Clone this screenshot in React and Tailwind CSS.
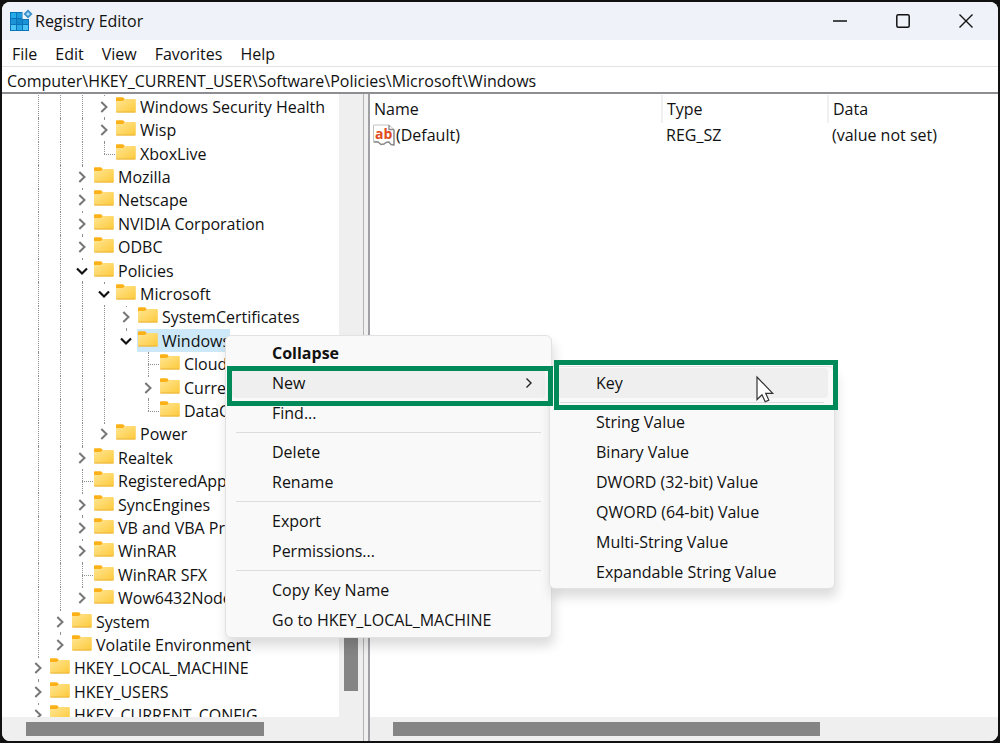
import { useState } from "react";
import clsx from "clsx";

const MENU = ["File", "Edit", "View", "Favorites", "Help"];

const NODES = [
  { name: "Windows Security Health", depth: 3, state: "closed" },
  { name: "Wisp", depth: 3, state: "closed" },
  { name: "XboxLive", depth: 3 },
  { name: "Mozilla", depth: 2, state: "closed" },
  { name: "Netscape", depth: 2, state: "closed" },
  { name: "NVIDIA Corporation", depth: 2, state: "closed" },
  { name: "ODBC", depth: 2, state: "closed" },
  { name: "Policies", depth: 2, state: "open" },
  { name: "Microsoft", depth: 3, state: "open" },
  { name: "SystemCertificates", depth: 4, state: "closed" },
  { name: "Windows", depth: 4, state: "open" },
  { name: "CloudContent", depth: 5 },
  { name: "CurrentVersion", depth: 5, state: "closed" },
  { name: "DataCollection", depth: 5 },
  { name: "Power", depth: 3, state: "closed" },
  { name: "Realtek", depth: 2, state: "closed" },
  { name: "RegisteredApplications", depth: 2 },
  { name: "SyncEngines", depth: 2, state: "closed" },
  { name: "VB and VBA Program Settings", depth: 2, state: "closed" },
  { name: "WinRAR", depth: 2, state: "closed" },
  { name: "WinRAR SFX", depth: 2 },
  { name: "Wow6432Node", depth: 2, state: "closed" },
  { name: "System", depth: 1, state: "closed" },
  { name: "Volatile Environment", depth: 1, state: "closed" },
  { name: "HKEY_LOCAL_MACHINE", depth: 0, state: "closed" },
  { name: "HKEY_USERS", depth: 0, state: "closed" },
  { name: "HKEY_CURRENT_CONFIG", depth: 0, state: "closed" },
];

// true when another node of the same level follows before the branch ends
const continues = (index, level) => {
  for (let i = index + 1; i < NODES.length; i++) {
    if (NODES[i].depth === level) return true;
    if (NODES[i].depth < level) return false;
  }
  return false;
};

const RegistryIcon = () => (
  <svg width="23" height="24" viewBox="0 0 23 24">
    <path d="M0 3h12.500v7H19v12H0z" fill="#0b74b8" />
    <path d="M1 4h5v5H1z" fill="#27aae8" />
    <path d="M7 4h5v5H7z" fill="#1d9bdc" />
    <path d="M1 10h5v5H1z" fill="#1c93d6" />
    <path d="M7 10h5v5H7z" fill="#1488cc" />
    <path d="M13 11h5v4h-5z" fill="#1c93d6" />
    <path d="M1 16h5v5H1zM13 16h5v5h-5z" fill="#4cc4f5" />
    <path d="M7 16h5v5H7z" fill="#2ba9e6" />
    <path d="M18 .500 22.500 5 18 9.500 13.500 5z" fill="#3c8fcb" />
    <path d="M18 3 20 5 18 7 16 5z" fill="#9fdcf8" />
  </svg>
);

const FolderIcon = () => (
  <svg width="20" height="16" viewBox="0 0 20 16" className="shrink-0">
    <defs>
      <linearGradient id="folder" x1="0" y1="0" x2="1" y2="1">
        <stop offset="0" stopColor="#ffe694" />
        <stop offset="1" stopColor="#fdc93a" />
      </linearGradient>
    </defs>
    <path d="M0 1.200Q0 .3 1 .3h5.600q.6 0 1 .5L9 2.200 7 4.500H0z" fill="#fbb117" />
    <path d="M0 4h6.500q.6 0 1-.5L9 2.100h9.800q1 0 1 1V14.500q0 1-1 1H1q-1 0-1-1z" fill="url(#folder)" />
    <path d="M.4 15h19" stroke="#eab43c" strokeWidth="1" />
  </svg>
);

const StringIcon = () => (
  <svg width="22" height="22" viewBox="0 0 22 22" className="shrink-0">
    <path
      d="M.5 1h15.500l5 4.500V21l-3-.5-2-2.500-3 .5-2 1.500-3 .5-3-2.500-2-.5L.5 17z"
      fill="#fff"
      stroke="#c4c4c4"
    />
    <path
      d="M16 1v4.500h5M21 5.500V21l-3-.5-2-2.500-3 .5-2 1.500-3 .5-3-2.500H.5"
      fill="none"
      stroke="#8b8b8b"
      strokeWidth="1.400"
    />
    <text x="2" y="15" fill="#de4b1c" fontSize="14" fontWeight="700" fontFamily="Open Sans, sans-serif">
      ab
    </text>
  </svg>
);

const Chevron = ({ open }) => (
  <svg width="12" height="12" viewBox="0 0 12 12" fill="none">
    {open ? (
      <path d="M1 3.500 6 8.500 11 3.500" stroke="#111" strokeWidth="2.200" />
    ) : (
      <path d="M3.300 1 8.500 6 3.300 11" stroke="#777" strokeWidth="2" />
    )}
  </svg>
);

const TreeRow = ({ node, index, selected, onSelect }) => {
  const more = continues(index, node.depth);
  return (
    <li className="flex min-h-0 pl-[25px]">
      {Array.from({ length: node.depth }, (_, level) => (
        <span key={level} className="flex w-[22px] shrink-0 pl-[11px]">
          {continues(index, level) && (
            <span className="border-l border-dotted border-[#8f8f8f]" />
          )}
        </span>
      ))}
      <span className="relative flex w-[22px] shrink-0 items-center justify-center">
        <span
          className={clsx(
            "absolute left-[11px] top-0 border-l border-dotted border-[#8f8f8f]",
            more ? "bottom-0" : "bottom-1/2"
          )}
        />
        {node.state ? (
          <button
            aria-label={`Toggle ${node.name}`}
            className="relative flex h-5 w-4 items-center justify-center bg-white"
          >
            <Chevron open={node.state === "open"} />
          </button>
        ) : (
          <span className="absolute left-[11px] right-0 top-1/2 border-t border-dotted border-[#8f8f8f]" />
        )}
      </span>
      <button
        onClick={() => onSelect(node.name)}
        className={clsx(
          "flex items-center gap-1 whitespace-nowrap pl-px leading-5",
          selected && "bg-[#cce8f9]"
        )}
      >
        <span className="pb-1">
          <FolderIcon />
        </span>
        {node.name}
      </button>
    </li>
  );
};

const MenuItem = ({ children, bold, active, arrow, outline }) => (
  <li className="relative">
    <button
      className={clsx(
        "flex h-[30px] w-full items-center justify-between rounded pl-10 pr-3 text-left",
        bold && "font-bold",
        active && "bg-[#efefef]"
      )}
    >
      {children}
      {arrow && (
        <svg width="8" height="12" viewBox="0 0 8 12" fill="none">
          <path d="M1.500 1.500 6 6 1.500 10.500" stroke="#222" strokeWidth="1.400" />
        </svg>
      )}
    </button>
    {outline}
  </li>
);

const Separator = () => (
  <li role="separator" className="flex h-[9px] items-center px-1">
    <span className="h-px w-full bg-[#dcdcdc]" />
  </li>
);

const ContextMenu = () => (
  <ul className="absolute left-[225px] top-[335px] w-[327px] rounded-md border border-[#e2e2e2] bg-[#f9f9f9] px-1.5 py-0.5 shadow-[2px_8px_12px_rgba(0,0,0,0.14)]">
    <MenuItem bold>Collapse</MenuItem>
    <MenuItem
      active
      arrow
      outline={
        <span className="pointer-events-none absolute -bottom-2 -left-[5px] -right-2 -top-0.5 z-10 border-[5px] border-[#008a5a]" />
      }
    >
      New
    </MenuItem>
    <MenuItem>Find...</MenuItem>
    <Separator />
    <MenuItem>Delete</MenuItem>
    <MenuItem>Rename</MenuItem>
    <Separator />
    <MenuItem>Export</MenuItem>
    <MenuItem>Permissions...</MenuItem>
    <Separator />
    <MenuItem>Copy Key Name</MenuItem>
    <MenuItem>Go to HKEY_LOCAL_MACHINE</MenuItem>
  </ul>
);

const NewSubmenu = () => (
  <ul className="absolute left-[549px] top-[366px] w-[286px] rounded-md border border-[#e2e2e2] bg-[#f9f9f9] px-1.5 py-px shadow-[2px_8px_12px_rgba(0,0,0,0.14)]">
    <MenuItem
      active
      outline={
        <span className="pointer-events-none absolute -bottom-3 -left-0.5 -right-2.5 -top-2 z-10 border-[5px] border-[#008a5a]" />
      }
    >
      Key
    </MenuItem>
    <Separator />
    <MenuItem>String Value</MenuItem>
    <MenuItem>Binary Value</MenuItem>
    <MenuItem>DWORD (32-bit) Value</MenuItem>
    <MenuItem>QWORD (64-bit) Value</MenuItem>
    <MenuItem>Multi-String Value</MenuItem>
    <MenuItem>Expandable String Value</MenuItem>
  </ul>
);

const Cursor = () => (
  <svg
    width="20"
    height="28"
    viewBox="0 0 20 28"
    className="pointer-events-none absolute left-[755px] top-[375px] z-20"
  >
    <path
      d="M2 2v22.500l5-4.800 3.200 7 3.600-1.600-3.100-6.800h7z"
      fill="#fff"
      stroke="#333"
      strokeWidth="1.200"
    />
  </svg>
);

const App = () => {
  const [selected, setSelected] = useState("Windows");
  const [path, setPath] = useState(
    "Computer\\HKEY_CURRENT_USER\\Software\\Policies\\Microsoft\\Windows"
  );

  return (
    <div className="relative h-screen bg-[#111] p-0.5 font-['Open_Sans',sans-serif] text-base text-[#111]">
      <div className="flex h-full flex-col overflow-hidden rounded-lg bg-white">
        <header className="flex h-[38px] shrink-0 items-center bg-[#f0f2f9] pl-2">
          <RegistryIcon />
          <h1 className="ml-0.5 grow">Registry Editor</h1>
          <button aria-label="Minimize" className="flex h-full w-[63px] items-center justify-center">
            <svg width="14" height="14" viewBox="0 0 14 14">
              <path d="M0 7h14" stroke="#111" strokeWidth="1.500" />
            </svg>
          </button>
          <button aria-label="Maximize" className="flex h-full w-[63px] items-center justify-center">
            <svg width="14" height="14" viewBox="0 0 14 14">
              <rect x=".8" y=".8" width="12.400" height="12.400" rx="1.500" fill="none" stroke="#111" strokeWidth="1.500" />
            </svg>
          </button>
          <button aria-label="Close" className="flex h-full w-16 items-center justify-center">
            <svg width="14" height="14" viewBox="0 0 14 14">
              <path d="M.5 .5l13 13M13.500 .5l-13 13" stroke="#111" strokeWidth="1.400" />
            </svg>
          </button>
        </header>

        <nav className="flex h-[27px] shrink-0 items-center gap-[18px] border-b border-[#e3e3e3] pl-2.5 pt-0.5">
          {MENU.map((item) => (
            <button key={item}>{item}</button>
          ))}
        </nav>

        <input
          aria-label="Address"
          value={path}
          onChange={(e) => setPath(e.target.value)}
          className="h-[27px] shrink-0 border-b-2 border-[#8d8d92] px-[5px] pt-0.5 outline-none"
        />

        <main className="flex min-h-0 grow">
          <section className="flex w-[362px] shrink-0 flex-col border-r border-[#b4b4b8]">
            <div className="flex min-h-0 grow">
              <ul className="grid h-[633px] min-w-0 grow auto-rows-fr grid-cols-1 overflow-hidden pt-px">
                {NODES.map((node, i) => (
                  <TreeRow
                    key={node.name}
                    node={node}
                    index={i}
                    selected={node.name === selected}
                    onSelect={setSelected}
                  />
                ))}
              </ul>
              <div className="flex w-6 shrink-0 flex-col justify-end bg-[#efefef] px-[5px] pb-[26px]">
                <div className="h-[120px] bg-[#858585]" />
              </div>
            </div>
            <div className="relative h-6 shrink-0 bg-[#efefef] py-[5px] pl-6">
              <div className="h-3.5 w-[238px] bg-[#858585]" />
            </div>
          </section>

          <div className="w-1 shrink-0 bg-[#f0f0f0]" />

          <section className="flex min-w-0 grow flex-col border-l-2 border-[#a0a0a5]">
            <div className="min-h-0 grow pt-px">
              <table className="w-full table-fixed text-left">
                <thead>
                  <tr className="h-7">
                    <th className="w-[292px] border-r-2 border-[#f0f0f0] pl-1 font-normal">Name</th>
                    <th className="w-[166px] border-r-2 border-[#f0f0f0] pl-1 font-normal">Type</th>
                    <th className="pl-1 font-normal">Data</th>
                  </tr>
                </thead>
                <tbody>
                  <tr>
                    <td className="pl-[3px]">
                      <span className="flex items-center gap-px">
                        <StringIcon />
                        (Default)
                      </span>
                    </td>
                    <td className="pl-1">REG_SZ</td>
                    <td className="pl-1">(value not set)</td>
                  </tr>
                </tbody>
              </table>
            </div>
            <div className="h-6 shrink-0 bg-[#efefef] py-[5px] pl-[23px]">
              <div className="h-3.5 w-[427px] bg-[#858585]" />
            </div>
          </section>
        </main>
      </div>

      <ContextMenu />
      <NewSubmenu />
      <Cursor />
    </div>
  );
};

export default App;
